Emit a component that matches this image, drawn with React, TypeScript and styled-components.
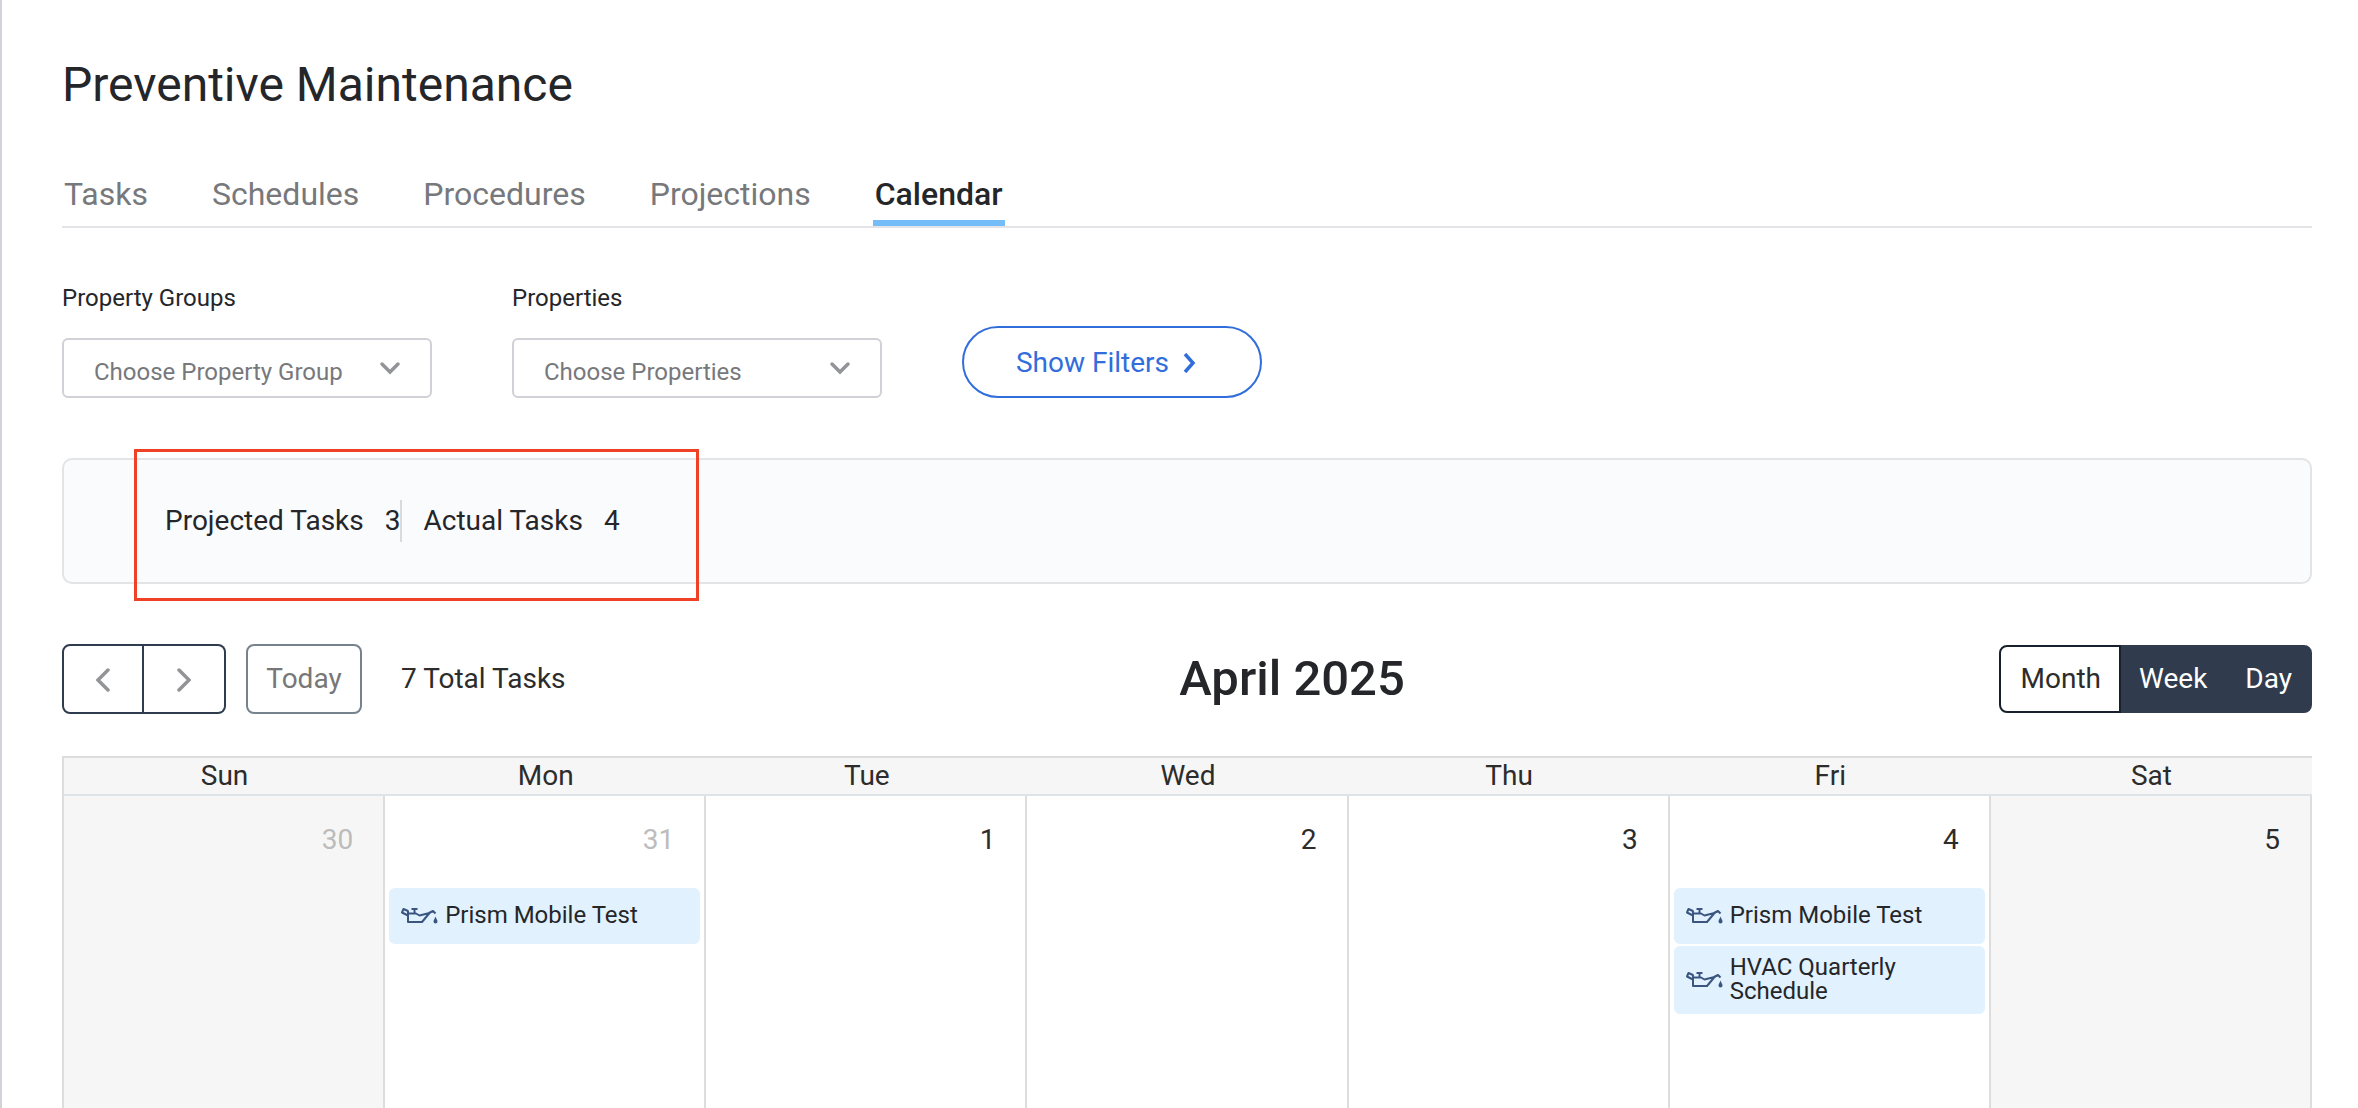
import React from 'react';
import styled, { createGlobalStyle } from 'styled-components';

const GlobalStyle = createGlobalStyle`
  *, *::before, *::after { box-sizing: border-box; }
  body {
    margin: 0;
    background: #ffffff;
    color: #25262a;
    font-family: Roboto, 'Liberation Sans', sans-serif;
    font-size: 28px;
    line-height: 36px;
  }
  button, select { font-family: inherit; font-size: inherit; line-height: inherit; cursor: pointer; }
`;

const Page = styled.main`
  display: flex;
  flex-direction: column;
  min-height: 100vh;
  padding: 57px 46px 0 60px;
  border-left: 2px solid #d2d2da;
`;

const Title = styled.h1`
  margin: 0;
  font-size: 48px;
  line-height: 56px;
  font-weight: 400;
`;

const Tabs = styled.nav`
  display: flex;
  gap: 60px;
  margin-top: 57px;
  border-bottom: 2px solid #e3e3e8;
`;

const Tab = styled.a<{ $active?: boolean }>`
  padding: 4px 2px 6px;
  border-bottom: 6px solid ${(p) => (p.$active ? '#75bdf9' : 'transparent')};
  color: ${(p) => (p.$active ? '#25262a' : '#77787c')};
  font-size: 32px;
  line-height: 40px;
  font-weight: ${(p) => (p.$active ? 500 : 400)};
  text-decoration: none;
`;

const Filters = styled.form`
  display: flex;
  align-items: flex-end;
  gap: 80px;
  margin-top: 54px;
`;

const Field = styled.div`
  display: flex;
  flex-direction: column;
  gap: 24px;
  width: 370px;
  font-size: 24px;
  line-height: 32px;
`;

const SelectBox = styled.div`
  position: relative;
  svg {
    position: absolute;
    top: 23px;
    right: 31px;
    pointer-events: none;
  }
`;

const Select = styled.select`
  display: block;
  width: 100%;
  height: 60px;
  padding: 8px 60px 0 30px;
  border: 2px solid #d1d1d7;
  border-radius: 6px;
  background: #ffffff;
  color: #77787c;
  appearance: none;
`;

const FilterButton = styled.button`
  display: flex;
  align-items: center;
  justify-content: center;
  gap: 14px;
  width: 300px;
  height: 72px;
  padding: 2px 12px 0 0;
  border: 2px solid #326ddc;
  border-radius: 36px;
  background: #ffffff;
  color: #326ddc;
`;

const Summary = styled.section`
  position: relative;
  display: flex;
  align-items: center;
  height: 126px;
  margin-top: 60px;
  padding-left: 101px;
  border: 2px solid #e3e4e6;
  border-radius: 10px;
  background: #fafbfd;
`;

const Highlight = styled.div`
  position: absolute;
  top: -11px;
  left: 70px;
  width: 565px;
  height: 152px;
  border: 3px solid #ee4126;
  pointer-events: none;
`;

const Stat = styled.div<{ $divided?: boolean }>`
  display: flex;
  gap: 21px;
  margin-right: 21px;
  line-height: 42px;
  border-right: ${(p) => (p.$divided ? '2px solid #d9dadd' : '0')};
`;

const Toolbar = styled.div`
  display: flex;
  align-items: center;
  justify-content: space-between;
  margin-top: 60px;
`;

const ToolbarStart = styled.div`
  display: flex;
  align-items: center;
  padding-right: 20px;
`;

const Pager = styled.div`
  display: flex;
  margin-right: 20px;
`;

const PagerButton = styled.button<{ $side: 'left' | 'right' }>`
  display: flex;
  align-items: center;
  justify-content: center;
  width: 82px;
  height: 70px;
  padding: 2px 0 0;
  border: 2px solid #2f3c4e;
  border-left-width: ${(p) => (p.$side === 'left' ? '2px' : '0')};
  border-radius: ${(p) => (p.$side === 'left' ? '8px 0 0 8px' : '0 8px 8px 0')};
  background: #ffffff;
`;

const TodayButton = styled.button`
  width: 116px;
  height: 70px;
  margin-right: 39px;
  padding: 0;
  border: 2px solid #77828f;
  border-radius: 8px;
  background: #ffffff;
  color: #777777;
`;

const Total = styled.span`
  color: #2c2c2c;
`;

const MonthTitle = styled.h2`
  margin: 0;
  font-size: 49px;
  line-height: 60px;
  font-weight: 500;
`;

const Views = styled.div`
  display: flex;
`;

const ViewButton = styled.button<{ $active?: boolean }>`
  position: relative;
  z-index: ${(p) => (p.$active ? 1 : 0)};
  height: 68px;
  padding: 0 18px;
  border: 2px solid ${(p) => (p.$active ? '#17202c' : '#303c4e')};
  background: ${(p) => (p.$active ? '#ffffff' : '#303c4e')};
  color: ${(p) => (p.$active ? '#2c2c2c' : '#ffffff')};
  &:first-child { padding-left: 20px; border-radius: 8px 0 0 8px; }
  &:last-child { border-radius: 0 8px 8px 0; }
  & + & { margin-left: -2px; }
`;

const Calendar = styled.table`
  flex: 1;
  width: 100%;
  margin-top: 42px;
  table-layout: fixed;
  border-collapse: separate;
  border-spacing: 0;
  border: 2px solid #dddddd;
  border-width: 2px 0 0 2px;
  color: #2c2c2c;
`;

const DayName = styled.th`
  height: 38px;
  padding: 0;
  border-bottom: 2px solid #dee3e7;
  background: #f6f6f6;
  font-weight: 400;
`;

const DayCell = styled.td<{ $weekend?: boolean }>`
  padding: 0;
  vertical-align: top;
  border-right: 2px solid #dddddd;
  background: ${(p) => (p.$weekend ? '#f6f6f6' : '#ffffff')};
`;

const DayNumber = styled.div<{ $muted?: boolean }>`
  padding: 26px 30px 30px 0;
  text-align: right;
  color: ${(p) => (p.$muted ? '#bcbcbc' : '#2c2c2c')};
`;

const Events = styled.div`
  display: flex;
  flex-direction: column;
  gap: 2px;
  padding: 0 4px;
`;

const Event = styled.a`
  display: flex;
  align-items: center;
  gap: 7px;
  min-height: 56px;
  padding: 9px 12px 11px;
  border-radius: 6px;
  background: #e1f1fe;
  color: #25262a;
  font-size: 24px;
  line-height: 24px;
  text-decoration: none;
  svg { flex: none; }
`;

type ChevronProps = { points: string; w: number; h: number; color?: string; cap?: 'round' | 'butt' };

const Chevron = ({ points, w, h, color = '#939498', cap = 'round' }: ChevronProps) => (
  <svg width={w} height={h} viewBox={`0 0 ${w} ${h}`} fill="none" stroke={color} strokeWidth="3.5" strokeLinecap={cap} aria-hidden="true">
    <polyline points={points} />
  </svg>
);

const OilCan = () => (
  <svg width="37" height="20" viewBox="0 -3 37 20" fill="none" stroke="#3a5680" strokeWidth="2" strokeLinejoin="round" aria-hidden="true">
    <path d="M7 2.5V14h14l7.5-9L18.500 7.500 15 5.500H7" />
    <path d="M7 3 2.500 1 1 4.500 7 7.500" />
    <path d="M10.500 1h6M13.500 1v4M28 5l4-2 2.500 2.500" />
    <path d="M34.500 8.500c1 2.500 2 3.500 2 5a2 2 0 0 1-4 0c0-1.500 1-2.500 2-5z" fill="#3a5680" stroke="none" />
  </svg>
);

const tabs = ['Tasks', 'Schedules', 'Procedures', 'Projections', 'Calendar'];
const dayNames = ['Sun', 'Mon', 'Tue', 'Wed', 'Thu', 'Fri', 'Sat'];
const days: { n: number; muted?: boolean; events?: string[] }[] = [
  { n: 30, muted: true },
  { n: 31, muted: true, events: ['Prism Mobile Test'] },
  { n: 1 },
  { n: 2 },
  { n: 3 },
  { n: 4, events: ['Prism Mobile Test', 'HVAC Quarterly Schedule'] },
  { n: 5 },
];

const Picker = ({ id, label, placeholder }: { id: string; label: string; placeholder: string }) => (
  <Field>
    <label htmlFor={id}>{label}</label>
    <SelectBox>
      <Select id={id}>
        <option>{placeholder}</option>
      </Select>
      <Chevron points="3,3 11,11 19,3" w={22} h={14} />
    </SelectBox>
  </Field>
);

export default function App() {
  return (
    <>
      <GlobalStyle />
      <Page>
        <Title>Preventive Maintenance</Title>
        <Tabs>
          {tabs.map((t) => (
            <Tab key={t} href="#" $active={t === 'Calendar'}>{t}</Tab>
          ))}
        </Tabs>
        <Filters>
          <Picker id="groups" label="Property Groups" placeholder="Choose Property Group" />
          <Picker id="properties" label="Properties" placeholder="Choose Properties" />
          <FilterButton type="button">
            Show Filters
            <Chevron points="2,1 10,10 2,19" w={13} h={20} color="#326ddc" cap="butt" />
          </FilterButton>
        </Filters>
        <Summary>
          <Stat $divided><span>Projected Tasks</span><span>3</span></Stat>
          <Stat><span>Actual Tasks</span><span>4</span></Stat>
          <Highlight />
        </Summary>
        <Toolbar>
          <ToolbarStart>
            <Pager>
              <PagerButton $side="left" aria-label="Previous month">
                <Chevron points="12,2 2,12 12,22" w={14} h={24} />
              </PagerButton>
              <PagerButton $side="right" aria-label="Next month">
                <Chevron points="2,2 12,12 2,22" w={14} h={24} />
              </PagerButton>
            </Pager>
            <TodayButton>Today</TodayButton>
            <Total>7 Total Tasks</Total>
          </ToolbarStart>
          <MonthTitle>April 2025</MonthTitle>
          <Views>
            <ViewButton $active>Month</ViewButton>
            <ViewButton>Week</ViewButton>
            <ViewButton>Day</ViewButton>
          </Views>
        </Toolbar>
        <Calendar>
          <thead>
            <tr>{dayNames.map((d) => <DayName key={d} scope="col">{d}</DayName>)}</tr>
          </thead>
          <tbody>
            <tr>
              {days.map((d, i) => (
                <DayCell key={d.n} $weekend={i === 0 || i === 6}>
                  <DayNumber $muted={d.muted}>{d.n}</DayNumber>
                  {d.events && (
                    <Events>
                      {d.events.map((e) => (
                        <Event key={e} href="#"><OilCan /><span>{e}</span></Event>
                      ))}
                    </Events>
                  )}
                </DayCell>
              ))}
            </tr>
          </tbody>
        </Calendar>
      </Page>
    </>
  );
}
